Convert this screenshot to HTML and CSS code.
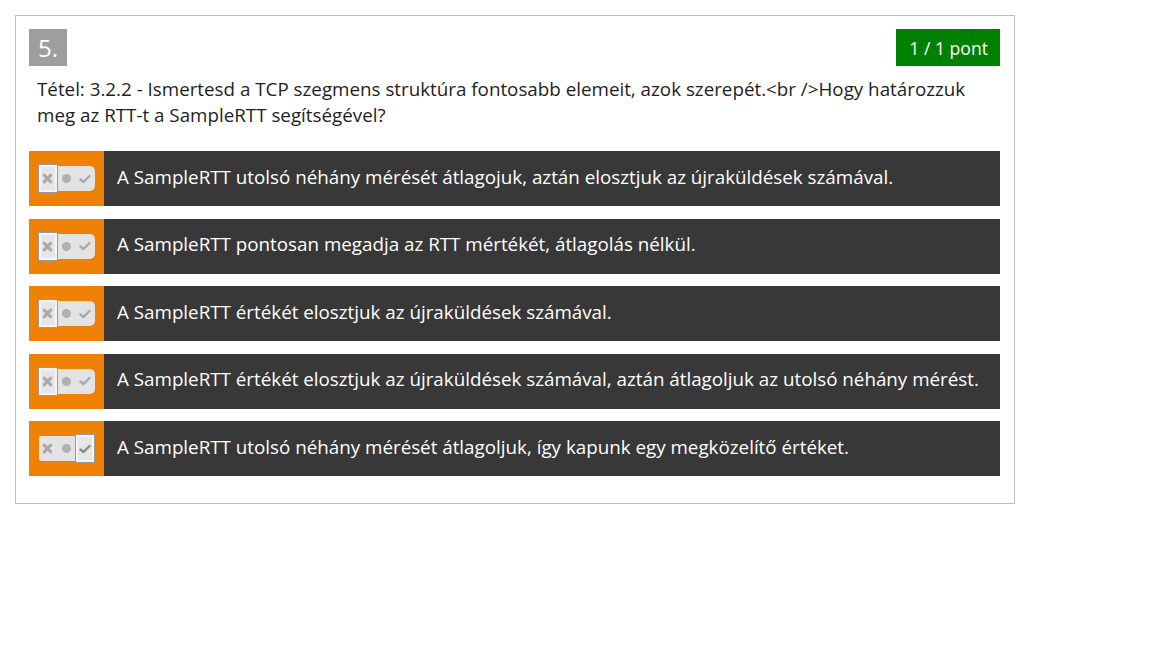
FILE: index.html
```html
<!DOCTYPE html>
<html lang="hu">
<head>
<meta charset="utf-8">
<link rel="stylesheet" href="styles.css">
</head>
<body>
<div class="card">
  <div class="head">
    <span class="num">5.</span>
    <span class="score">1 / 1 pont</span>
  </div>
  <div class="question">Tétel: 3.2.2 - Ismertesd a TCP szegmens struktúra fontosabb elemeit, azok szerepét.&lt;br /&gt;Hogy határozzuk meg az RTT-t a SampleRTT segítségével?</div>
  <div class="answers">
    <div class="answer">
      <div class="mark"><div class="toggle sel-no">
        <span class="seg seg-x"><svg viewBox="0 0 10 10" width="11" height="11"><path d="M2 2L8 8M8 2L2 8" stroke="#a9a9a9" stroke-width="2.8" stroke-linecap="round"/></svg></span>
        <span class="seg seg-dot"><span class="dot"></span></span>
        <span class="seg seg-ok"><svg viewBox="0 0 12 10" width="12" height="10"><path d="M1.5 5.5L4.5 8L10.5 2" fill="none" stroke="#a9a9a9" stroke-width="2.4" stroke-linecap="round" stroke-linejoin="round"/></svg></span>
      </div></div>
      <div class="text">A SampleRTT utolsó néhány mérését átlagojuk, aztán elosztjuk az újraküldések számával.</div>
    </div>
    <div class="answer">
      <div class="mark"><div class="toggle sel-no">
        <span class="seg seg-x"><svg viewBox="0 0 10 10" width="11" height="11"><path d="M2 2L8 8M8 2L2 8" stroke="#a9a9a9" stroke-width="2.8" stroke-linecap="round"/></svg></span>
        <span class="seg seg-dot"><span class="dot"></span></span>
        <span class="seg seg-ok"><svg viewBox="0 0 12 10" width="12" height="10"><path d="M1.5 5.5L4.5 8L10.5 2" fill="none" stroke="#a9a9a9" stroke-width="2.4" stroke-linecap="round" stroke-linejoin="round"/></svg></span>
      </div></div>
      <div class="text">A SampleRTT pontosan megadja az RTT mértékét, átlagolás nélkül.</div>
    </div>
    <div class="answer">
      <div class="mark"><div class="toggle sel-no">
        <span class="seg seg-x"><svg viewBox="0 0 10 10" width="11" height="11"><path d="M2 2L8 8M8 2L2 8" stroke="#a9a9a9" stroke-width="2.8" stroke-linecap="round"/></svg></span>
        <span class="seg seg-dot"><span class="dot"></span></span>
        <span class="seg seg-ok"><svg viewBox="0 0 12 10" width="12" height="10"><path d="M1.5 5.5L4.5 8L10.5 2" fill="none" stroke="#a9a9a9" stroke-width="2.4" stroke-linecap="round" stroke-linejoin="round"/></svg></span>
      </div></div>
      <div class="text">A SampleRTT értékét elosztjuk az újraküldések számával.</div>
    </div>
    <div class="answer">
      <div class="mark"><div class="toggle sel-no">
        <span class="seg seg-x"><svg viewBox="0 0 10 10" width="11" height="11"><path d="M2 2L8 8M8 2L2 8" stroke="#a9a9a9" stroke-width="2.8" stroke-linecap="round"/></svg></span>
        <span class="seg seg-dot"><span class="dot"></span></span>
        <span class="seg seg-ok"><svg viewBox="0 0 12 10" width="12" height="10"><path d="M1.5 5.5L4.5 8L10.5 2" fill="none" stroke="#a9a9a9" stroke-width="2.4" stroke-linecap="round" stroke-linejoin="round"/></svg></span>
      </div></div>
      <div class="text">A SampleRTT értékét elosztjuk az újraküldések számával, aztán átlagoljuk az utolsó néhány mérést.</div>
    </div>
    <div class="answer">
      <div class="mark"><div class="toggle sel-ok">
        <span class="seg seg-x"><svg viewBox="0 0 10 10" width="11" height="11"><path d="M2 2L8 8M8 2L2 8" stroke="#a9a9a9" stroke-width="2.8" stroke-linecap="round"/></svg></span>
        <span class="seg seg-dot"><span class="dot"></span></span>
        <span class="seg seg-ok"><svg viewBox="0 0 12 10" width="12" height="10"><path d="M1.5 5.5L4.5 8L10.5 2" fill="none" stroke="#8a8a8a" stroke-width="2.4" stroke-linecap="round" stroke-linejoin="round"/></svg></span>
      </div></div>
      <div class="text">A SampleRTT utolsó néhány mérését átlagoljuk, így kapunk egy megközelítő értéket.</div>
    </div>
  </div>
</div>
</body>
</html>
```
FILE: styles.css
```css
html, body {
  margin: 0;
  padding: 0;
  background: #fff;
}
body {
  font-family: "Open Sans", "Noto Sans", sans-serif;
  color: #222;
}
.card {
  box-sizing: border-box;
  margin: 15px 0 0 15px;
  width: 1000px;
  border: 1px solid #bdbdbd;
  padding: 13px 14px 27px 13px;
}
.head {
  display: flex;
  justify-content: space-between;
  align-items: flex-start;
}
.num {
  display: flex;
  align-items: center;
  justify-content: center;
  width: 38px;
  height: 37px;
  background: #9e9e9e;
  color: #fff;
  font-size: 24px;
  line-height: 1;
}
.score {
  display: flex;
  align-items: center;
  height: 37px;
  padding: 0 12px 0 13px;
  background: #008000;
  color: #fff;
  font-size: 17.6px;
}
.question {
  margin: 10px 0 23px 8px;
  font-size: 18.8px;
  line-height: 26px;
  color: #1e1e1e;
}
.answers {
  display: flex;
  flex-direction: column;
  gap: 12.5px;
}
.answer {
  display: flex;
  height: 55px;
  background: #383838;
}
.mark {
  flex: 0 0 75px;
  background: #ee8106;
  display: flex;
  align-items: center;
  justify-content: center;
}
.toggle {
  position: relative;
  display: flex;
  align-items: center;
  width: 56px;
  height: 25px;
  background: #e3e3e3;
  border-radius: 2px 5px 5px 2px;
  box-shadow: 0 0 1px rgba(0,0,0,0.15);
}
.seg {
  flex: 0 0 18.6px;
  height: 25px;
  display: flex;
  align-items: center;
  justify-content: center;
  box-sizing: border-box;
}
.dot {
  width: 9px;
  height: 9px;
  border-radius: 50%;
  background: #b0b0b0;
}
.sel-no .seg-x,
.sel-ok .seg-ok {
  border: 2px solid #f4f4f4;
  outline: 1px solid #9a9a9a;
  background: #e6e6e6;
  height: 27px;
}
.text {
  display: flex;
  align-items: center;
  padding: 0 0 4px 13px;
  color: #fff;
  font-size: 18.8px;
}
```
